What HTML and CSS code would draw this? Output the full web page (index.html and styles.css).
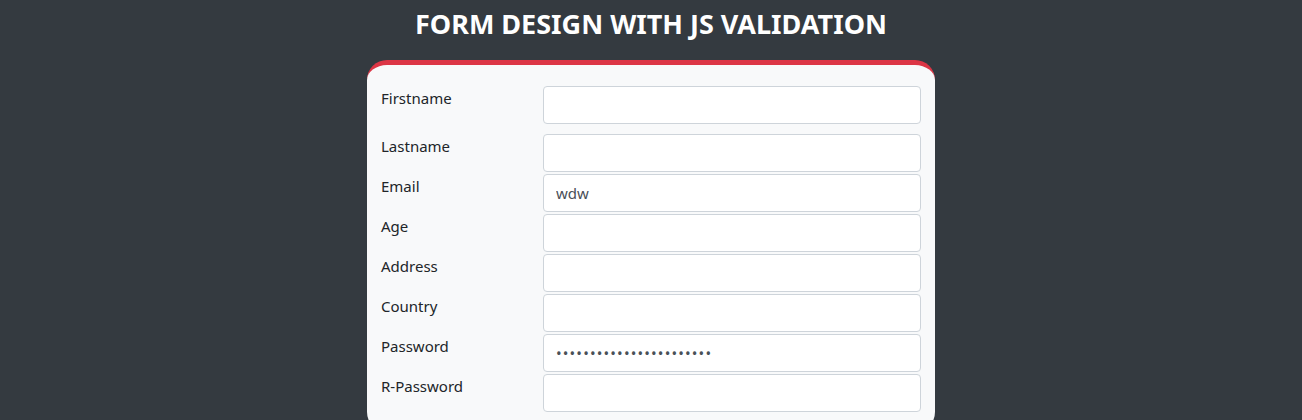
FILE: index.html
```html
<!DOCTYPE html>
<html>
<head>
<meta charset="utf-8">
<link rel="stylesheet" href="styles.css">
</head>
<body>
<h2 class="title">FORM DESIGN WITH JS VALIDATION</h2>
<div class="card">
  <form class="form">
    <div class="row first"><label class="lbl">Firstname</label><input class="inp" type="text"></div>
    <div class="row"><label class="lbl">Lastname</label><input class="inp" type="text"></div>
    <div class="row"><label class="lbl">Email</label><input class="inp" type="text" value="wdw"></div>
    <div class="row"><label class="lbl">Age</label><input class="inp" type="text"></div>
    <div class="row"><label class="lbl">Address</label><input class="inp" type="text"></div>
    <div class="row"><label class="lbl">Country</label><input class="inp" type="text"></div>
    <div class="row"><label class="lbl">Password</label><input class="inp pw" type="password" value="abcdefghijklmnopqrstuvw"></div>
    <div class="row"><label class="lbl">R-Password</label><input class="inp pw" type="password"></div>
  </form>
</div>
</body>
</html>
```
FILE: styles.css
```css
html, body {
  margin: 0;
  padding: 0;
  background: #343a40;
  font-family: "Noto Sans", "Open Sans", sans-serif;
  overflow: hidden;
}
.title {
  margin: 0;
  padding-top: 5px;
  height: 55px;
  text-align: center;
  color: #fff;
  font-size: 27px;
  font-weight: 700;
  line-height: 38px;
}
.card {
  width: 568px;
  margin: 0 auto;
  box-sizing: border-box;
  background: #f8f9fa;
  border-top: 5px solid #dc3545;
  border-radius: 20px;
  padding: 21px 14px 20px 14px;
}
.form {
  display: flex;
  flex-direction: column;
  gap: 2px;
}
.row {
  display: flex;
  align-items: flex-start;
}
.row.first {
  margin-bottom: 8px;
}
.lbl {
  width: 162px;
  flex: none;
  font-size: 15px;
  line-height: 24px;
  color: #212529;
}
.inp {
  width: 378px;
  height: 38px;
  box-sizing: border-box;
  border: 1px solid #ced4da;
  border-radius: 4px;
  background: #fff;
  padding: 6px 12px;
  font-family: "Noto Sans", "Open Sans", sans-serif;
  font-size: 15px;
  color: #495057;
  outline: none;
}
.pw {
  letter-spacing: 1.15px;
}
```
